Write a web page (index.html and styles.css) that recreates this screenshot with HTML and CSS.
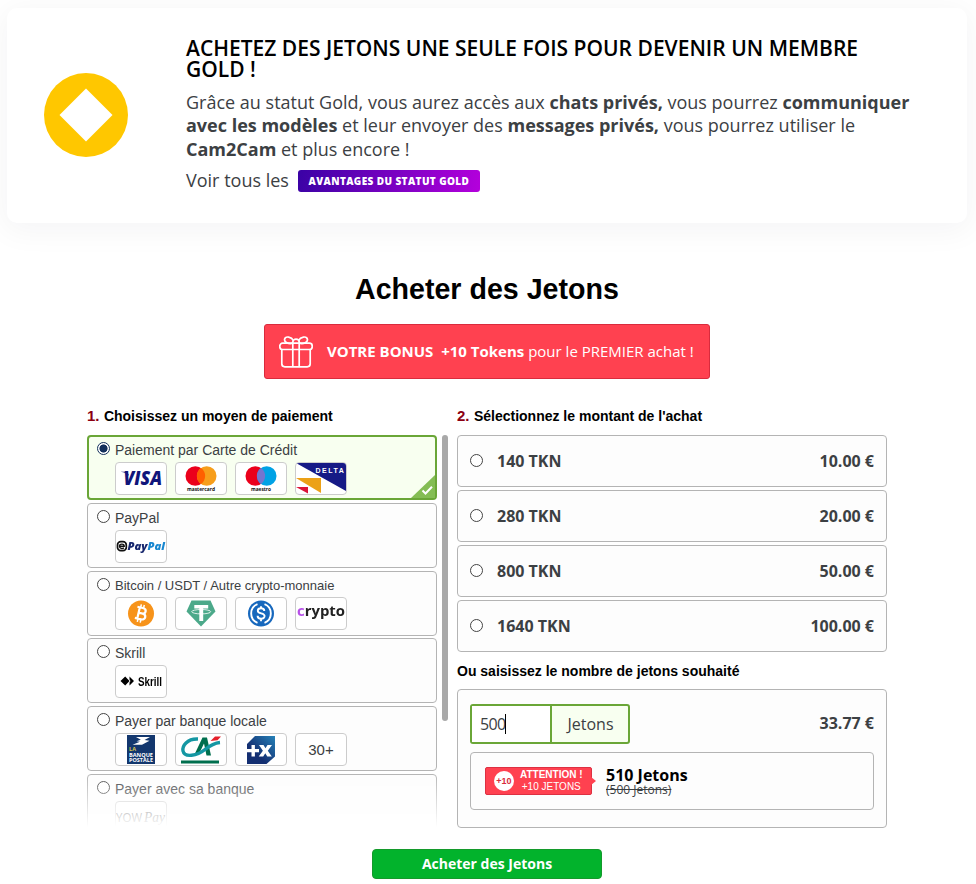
FILE: index.html
```
<!DOCTYPE html>
<html lang="fr">
<head>
    <meta charset="UTF-8">
    <meta name="viewport" content="width=device-width, initial-scale=1.0">
    <title>Acheter des Jetons</title>
    <link rel="stylesheet" href="styles.css">
</head>
<body>

<div class="gold-card">
    <svg class="gold-icon" viewBox="0 0 84 84"><circle cx="42" cy="42" r="42" fill="#ffc700"/><path d="M42 15.5 68.5 42 42 68.5 15.5 42z" fill="#fff"/></svg>
    <div class="gold-text">
        <h2>ACHETEZ DES JETONS UNE SEULE FOIS POUR DEVENIR UN MEMBRE<br>GOLD !</h2>
        <p>Grâce au statut Gold, vous aurez accès aux <b>chats privés,</b> vous pourrez <b>communiquer<br>avec les modèles</b> et leur envoyer des <b>messages privés,</b> vous pourrez utiliser le<br><b>Cam2Cam</b> et plus encore !</p>
        <div class="gold-more">Voir tous les <a class="gold-link">AVANTAGES DU STATUT GOLD</a></div>
    </div>
</div>

<h1>Acheter des Jetons</h1>

<div class="bonus">
    <svg class="gift" viewBox="0 0 34 32" fill="none" stroke="#fff" stroke-width="1.7">
        <rect x=".8" y="7.2" width="32.4" height="6.3" rx="2.8"/>
        <path d="M2.8 13.5v14.3a3 3 0 0 0 3 3h22.4a3 3 0 0 0 3-3V13.5M13.8 7.2v23.6M20.2 7.2v23.6"/>
        <path d="M14 7.2C9.5 8.3 5 6.6 5.6 3.2 6.4-.4 12.5.8 14.5 4.6M20 7.2c4.5 1.1 9-.6 8.4-4C27.6-.4 21.5.8 19.5 4.6"/>
        <path d="M13.8 7.2v-1.2a3.2 2.8 0 0 1 6.4 0v1.2"/>
    </svg>
    <span class="bonus-text"><b>VOTRE BONUS&nbsp; +10 Tokens</b> pour le PREMIER achat !</span>
</div>

<div class="columns">
    <div class="left">
        <h3><span>1.</span> Choisissez un moyen de paiement</h3>
        <div class="methods-wrap">
            <div class="methods">

                <label class="method active">
                    <input type="radio" name="method" checked>
                    <div class="method-body">
                        <div class="method-name">Paiement par Carte de Crédit</div>
                        <div class="logos">
                            <svg class="logo" viewBox="0 0 50 31">
                                <text x="7.5" y="22" class="visa" textLength="38.5" lengthAdjust="spacingAndGlyphs">VISA</text>
                                <path d="M4.5 8.8h7l1.6 4.2C11 10.4 8.4 9.4 4.5 8.8z" fill="#10157a"/>
                            </svg>
                            <svg class="logo" viewBox="0 0 50 31">
                                <circle cx="19.3" cy="13" r="9.8" fill="#eb001b"/><circle cx="30.7" cy="13" r="9.8" fill="#f79e1b"/>
                                <path d="M25 5a9.800 9.800 0 0 1 0 16 9.800 9.800 0 0 1 0-16z" fill="#ff5f00"/>
                                <text x="11" y="27.5" class="brand" textLength="28" lengthAdjust="spacingAndGlyphs">mastercard</text>
                            </svg>
                            <svg class="logo" viewBox="0 0 50 31">
                                <circle cx="19.3" cy="13" r="9.8" fill="#eb001b"/><circle cx="30.7" cy="13" r="9.8" fill="#00a2e5"/>
                                <path d="M25 5a9.800 9.800 0 0 1 0 16 9.800 9.800 0 0 1 0-16z" fill="#7375cf"/>
                                <text x="15" y="27.5" class="brand" textLength="20" lengthAdjust="spacingAndGlyphs">maestro</text>
                            </svg>
                            <svg class="logo" viewBox="0 0 50 31">
                                <path d="M0 0h50v28z" fill="#161a86"/>
                                <path d="M0 15h25v15z" fill="#eca117"/>
                                <path d="M0 24h12v6.500z" fill="#dc1438"/>
                                <text x="19.5" y="9.5" class="delta">DELTA</text>
                            </svg>
                        </div>
                    </div>
                    <svg class="corner" viewBox="0 0 24 23"><path d="M24 0v23H0z" fill="#84bd54"/><path d="m11.500 15.500 3 3 6.500-6.800" fill="none" stroke="#fff" stroke-width="2"/></svg>
                </label>

                <label class="method">
                    <input type="radio" name="method">
                    <div class="method-body">
                        <div class="method-name">PayPal</div>
                        <div class="logos">
                            <svg class="logo" viewBox="0 0 50 31">
                                <rect x="1.5" y="10.7" width="8.8" height="9" rx="3.3" fill="none" stroke="#111" stroke-width="1.7"/>
                                <path d="M3.500 15.200h4.700c0-2.800-4.700-2.800-4.700 0 0 2.300 3 3 4.400 1.500" fill="none" stroke="#111" stroke-width="1.4"/>
                                <text x="11.5" y="19" class="paypal" textLength="37.5" lengthAdjust="spacingAndGlyphs">Pay<tspan fill="#1887d0">Pal</tspan></text>
                            </svg>
                        </div>
                    </div>
                </label>

                <label class="method">
                    <input type="radio" name="method">
                    <div class="method-body">
                        <div class="method-name small">Bitcoin / USDT / Autre crypto-monnaie</div>
                        <div class="logos">
                            <svg class="logo" viewBox="0 0 50 31">
                                <circle cx="25" cy="15.5" r="13" fill="#f7931a"/>
                                <g transform="rotate(13 25 15.5)" fill="none" stroke="#fff">
                                    <path d="M22.500 9.500v12M20 9.700h5.500c4.700 0 4.700 5.500 0 5.500h-3 3.700c5 0 5 6 0 6H20" stroke-width="2.2"/>
                                    <path d="M23.300 6.500v3M26.300 6.500v3M23.300 21.500v3M26.300 21.500v3" stroke-width="1.5"/>
                                </g>
                            </svg>
                            <svg class="logo" viewBox="0 0 50 31">
                                <path d="M15.500 2.500h19L39.500 13.500 25 28.500 10.500 13.500z" fill="#4ca98a"/>
                                <path d="M18.300 7h13.900v3.500h-5v12.500h-3.900v-12.500h-5z" fill="#fff"/>
                                <ellipse cx="25.2" cy="13.7" rx="9.5" ry="2.2" fill="none" stroke="#fff" stroke-width=".8"/>
                            </svg>
                            <svg class="logo" viewBox="0 0 50 31">
                                <circle cx="25" cy="15.5" r="13" fill="#1768bd"/>
                                <path d="M21.500 6.200a10 10 0 0 0 0 18.600M28.500 6.200a10 10 0 0 1 0 18.600" fill="none" stroke="#fff" stroke-width="1.9"/>
                                <path d="M28.300 13c0-3.800-6.500-3.500-6.500-.3 0 3.700 6.800 1.700 6.800 5.400 0 3.600-7 3.500-7-.4M25 8.300v2M25 20.700v2.500" fill="none" stroke="#fff" stroke-width="1.9"/>
                            </svg>
                            <svg class="logo" viewBox="0 0 50 31"><text x="1" y="18" class="crypto" textLength="48" lengthAdjust="spacingAndGlyphs"><tspan fill="#b750e8">c</tspan>rypto</text></svg>
                        </div>
                    </div>
                </label>

                <label class="method">
                    <input type="radio" name="method">
                    <div class="method-body">
                        <div class="method-name">Skrill</div>
                        <div class="logos">
                            <svg class="logo" viewBox="0 0 50 31">
                                <path d="m4.500 15 4.700-4.500 4.300 4.500-4.300 4.500zM13.500 10.500l4.500 4.500-4.500 4.500v-3l1-1.500-1-1.500z" fill="#000"/>
                                <text x="22" y="19.5" class="skrill" textLength="24" lengthAdjust="spacingAndGlyphs">Skrill</text>
                            </svg>
                        </div>
                    </div>
                </label>

                <label class="method">
                    <input type="radio" name="method">
                    <div class="method-body">
                        <div class="method-name">Payer par banque locale</div>
                        <div class="logos">
                            <svg class="logo" viewBox="0 0 50 31">
                                <rect x="11" y="1" width="28" height="29" fill="#13376e"/>
                                <path d="M20 3h14l-5.500 3 5 .8-7.500 4H16.500l7.500-3-3.500-.6 4.300-1.500z" fill="#fff"/>
                                <text x="13" y="17" class="postale" textLength="7" lengthAdjust="spacingAndGlyphs" fill="#d6c34f">LA</text>
                                <text x="13" y="22.5" class="postale" textLength="24" lengthAdjust="spacingAndGlyphs">BANQUE</text>
                                <text x="13" y="28" class="postale" textLength="24" lengthAdjust="spacingAndGlyphs">POSTALE</text>
                            </svg>
                            <svg class="logo" viewBox="0 0 50 31">
                                <path d="M18.500 20.500 26.500 3.500H31l4 18h-4.500L28 9.500 22.500 21z" fill="#006f4e"/>
                                <path d="M22 5C11 4.500 6 12 7 17c1.500 7 14 5 22-1.500 5-4 9-6.500 15-7" fill="none" stroke="#1597a3" stroke-width="3.4"/>
                                <path d="m34.500 7 4.500-4.500h6l-3.500 3.700z" fill="#e5202b"/>
                                <path d="M5 26.500h38v3H5z" fill="#006f4e"/>
                            </svg>
                            <svg class="logo" viewBox="0 0 50 31">
                                <defs><linearGradient id="axa" x1="0" y1="1" x2="1" y2="0"><stop offset=".35" stop-color="#142f72"/><stop offset="1" stop-color="#2682b8"/></linearGradient></defs>
                                <path d="M19 2h20v20.500L30.500 30H11V10z" fill="url(#axa)"/>
                                <path d="M11 15h12v3.300H11zM15.500 11h3.400v11.500h-3.400z" fill="#fff"/>
                                <path d="M23 11h4.500l2 3.300 2-3.300H36l-4.200 5.700 4 5.800h-4.500l-2-3.300-2.100 3.300h-4.500l4.200-5.800z" fill="#fff"/>
                            </svg>
                            <div class="logo more">30+</div>
                        </div>
                    </div>
                </label>

                <label class="method">
                    <input type="radio" name="method">
                    <div class="method-body">
                        <div class="method-name">Payer avec sa banque</div>
                        <div class="logos">
                            <svg class="logo" viewBox="0 0 50 31">
                                <text x="0" y="20" class="yow" textLength="26" lengthAdjust="spacingAndGlyphs">YOW</text>
                                <text x="28" y="20" class="yow-pay" textLength="21" lengthAdjust="spacingAndGlyphs">Pay</text>
                            </svg>
                        </div>
                    </div>
                </label>

            </div>
            <div class="scrollbar"></div>
        </div>
    </div>

    <div class="right">
        <h3><span>2.</span> Sélectionnez le montant de l'achat</h3>
        <div class="amounts">
            <label class="amount"><input type="radio" name="amount"><b>140 TKN</b><b class="price">10.00 €</b></label>
            <label class="amount"><input type="radio" name="amount"><b>280 TKN</b><b class="price">20.00 €</b></label>
            <label class="amount"><input type="radio" name="amount"><b>800 TKN</b><b class="price">50.00 €</b></label>
            <label class="amount"><input type="radio" name="amount"><b>1640 TKN</b><b class="price">100.00 €</b></label>
        </div>
        <h4>Ou saisissez le nombre de jetons souhaité</h4>
        <div class="custom">
            <div class="custom-row">
                <div class="field">
                    <div class="value">500<i class="caret"></i></div>
                    <div class="unit">Jetons</div>
                </div>
                <b class="price">33.77 €</b>
            </div>
            <div class="result">
                <div class="tag">
                    <span class="plus">+10</span>
                    <span class="tag-text"><b>ATTENTION !</b><br>+10 JETONS</span>
                </div>
                <div class="total"><b>510 Jetons</b><s>(500 Jetons)</s></div>
            </div>
        </div>
    </div>
</div>

<button class="buy">Acheter des Jetons</button>

</body>
</html>
```
FILE: styles.css
```
*{
    margin:0;
    padding:0;
    box-sizing:border-box;
}

html{
    --green:#6aa637;
    --line:#b4b4b4;
    --red:#ff4150;
    --txt:#3c4043;
}

body{
    width:976px;
    height:884px;
    overflow:hidden;
    background:#fff;
    font-family:"Open Sans", sans-serif;
    color:var(--txt);
}

.gold-card{
    display:flex;
    width:960px;
    height:215px;
    margin:8px 0 0 7px;
    padding:0 37px;
    border-radius:10px;
    background:#fff;
    box-shadow:0 5px 30px 4px rgba(20, 20, 40, 0.042);
}

.gold-icon{ width:84px; height:84px; margin-top:65px; flex:none; }
.gold-text{ margin:30px 0 0 58px; white-space:nowrap; }

.gold-text h2{
    font-size:21px;
    line-height:21px;
    font-weight:600;
    color:#000;
}

.gold-text p{
    margin-top:11px;
    font-size:18px;
    line-height:23.3px;
}

.gold-more{
    display:flex;
    align-items:center;
    margin-top:8px;
    height:23px;
    font-size:18px;
    line-height:22px;
}

.gold-link{
    display:block;
    width:182px;
    height:22px;
    margin:2px 0 0 9px;
    border-radius:3px;
    background:linear-gradient(100deg, #3a02a5, #b400dc);
    color:#fff;
    font-size:10px;
    font-weight:800;
    line-height:22px;
    letter-spacing:.4px;
    text-align:center;
}

h1{
    margin:49px 0 0 355px;
    font:bold 28.6px/34px "Liberation Sans", sans-serif;
    color:#000;
    white-space:nowrap;
}

.bonus{
    display:flex;
    align-items:center;
    width:446px;
    height:55px;
    margin:18px 0 0 264px;
    padding-left:14px;
    border:1px solid #d92b3d;
    border-radius:3px;
    background:var(--red);
    color:#fff;
    font-size:15px;
    white-space:nowrap;
}

.bonus-text{ padding-bottom:2px; }
.gift{ width:34px; height:32px; margin-right:14px; }

.columns{
    display:flex;
    gap:9px;
    margin:27px 0 0 87px;
}

.left{ width:361px; }
.right{ width:430px; }

h3, h4{
    font:bold 14px/20px "Liberation Sans", sans-serif;
    color:#000;
    white-space:nowrap;
}

h3{ height:29px; }
h3 span{ margin-right:.5px; color:#8b0012; font-size:15px; }
h4{ margin-top:9px; height:28px; }

.methods-wrap{ display:flex; gap:5px; }

.methods{
    display:flex;
    flex-direction:column;
    gap:2.8px;
    width:350px;
    height:393px;
    overflow:hidden;
    -webkit-mask-image:linear-gradient(#000 338px, transparent 392px);
    mask-image:linear-gradient(#000 338px, transparent 392px);
}

.scrollbar{ width:6px; height:286px; border-radius:3px; background:#a9a9a9; }

.method{
    display:flex;
    flex:none;
    position:relative;
    height:65px;
    padding:6px 0 0 9px;
    border:1px solid var(--line);
    border-radius:4px;
    background:#fdfdfd;
}

.method.active{
    padding:5px 0 0 8px;
    border:2px solid var(--green);
    background:#f8fff0;
}

input[type=radio]{
    appearance:none;
    flex:none;
    width:13px;
    height:13px;
    border:1px solid #444;
    border-radius:50%;
    background:#fff;
}

input[type=radio]:checked{
    border-color:#14305c;
    background:radial-gradient(circle, #14305c 3.7px, #fff 4.4px);
}

.method-body{ margin-left:5px; }

.method-name{
    height:20px;
    font:14px/17px "Liberation Sans", sans-serif;
    white-space:nowrap;
}

.method-name.small{ height:19px; font-size:13px; line-height:16px; }
.logos{ display:flex; gap:8px; }

.logo{
    display:block;
    width:52px;
    height:33px;
    border:1px solid #ccc;
    border-radius:4px;
    background:#fff;
}

.more{ font:15px/32px "Liberation Sans", sans-serif; text-align:center; }
.corner{ position:absolute; right:0; bottom:0; width:24px; height:23px; }

.visa{ font:italic 800 19px "Open Sans", sans-serif; fill:#10157a; }
.brand{ font:bold 6px "Open Sans", sans-serif; fill:#111; }
.delta{ font:bold 7px "Liberation Sans", sans-serif; letter-spacing:1.5px; fill:#fff; }
.paypal{ font:italic 800 11px "Open Sans", sans-serif; fill:#17276e; }
.crypto{ font:bold 15px "Open Sans", sans-serif; fill:#222; }
.skrill{ font:bold 12px "Liberation Sans", sans-serif; fill:#000; }
.postale{ font:bold 4.8px/1 "Open Sans", sans-serif; }
.postale:not([fill]){ fill:#fff; }
.yow{ font:12px "Open Sans", sans-serif; fill:#444; }
.yow-pay{ font:italic 14px "Liberation Serif", serif; fill:#444; }

.amounts{ display:flex; flex-direction:column; gap:3px; }

.amount{
    display:flex;
    align-items:center;
    height:52px;
    padding:0 12px;
    border:1px solid var(--line);
    border-radius:4px;
    background:#fdfdfd;
    font-size:16px;
}

.amount input{ margin:0 14px 1px 0; }
.price{ margin-left:auto; font-size:16px; }

.custom{
    height:139px;
    padding:14px 12px;
    border:1px solid var(--line);
    border-radius:4px;
    background:#fdfdfd;
}

.custom-row{ display:flex; height:40px; font-size:16px; }
.custom-row .price{ line-height:38px; }

.field{
    display:flex;
    width:160px;
    border:2px solid var(--green);
    border-radius:3px;
    background:#f8fff0;
}

.value{
    display:flex;
    align-items:center;
    width:80px;
    padding-left:8px;
    border-right:2px solid var(--green);
    background:#fff;
    letter-spacing:-.7px;
}

.caret{ width:1px; height:20px; background:#000; }
.unit{ flex:1; padding-left:1px; line-height:37px; text-align:center; }

.result{
    display:flex;
    height:58px;
    margin-top:8px;
    padding:14px;
    border:1px solid var(--line);
    border-radius:4px;
}

.tag{
    display:flex;
    align-items:center;
    position:relative;
    width:107px;
    height:28px;
    padding-left:8px;
    border:1px solid #dd3042;
    border-radius:2px;
    background:var(--red);
    color:#fff;
}

.tag:after{
    content:"";
    position:absolute;
    left:105px;
    top:9px;
    border:4.5px solid transparent;
    border-left:5px solid var(--red);
    border-right:0;
}

.plus{
    width:20px;
    height:20px;
    border-radius:50%;
    background:#fff;
    color:#d92b3d;
    font:bold 9px/20px "Liberation Sans", sans-serif;
    text-align:center;
}

.tag-text{
    margin-left:6px;
    font:10px/12px "Liberation Sans", sans-serif;
    text-align:center;
    white-space:nowrap;
}

.total{
    display:flex;
    flex-direction:column;
    margin:-1px 0 0 14px;
}

.total b{ font-size:16px; line-height:18px; color:#000; }
.total s{ font-size:12px; line-height:11px; }

.buy{
    display:block;
    width:230px;
    height:30px;
    margin:21px 0 0 372px;
    padding-bottom:2px;
    border:1px solid #149a2b;
    border-radius:4px;
    background:#02b32c;
    color:#fff;
    font:bold 14px "Open Sans", sans-serif;
}
```
